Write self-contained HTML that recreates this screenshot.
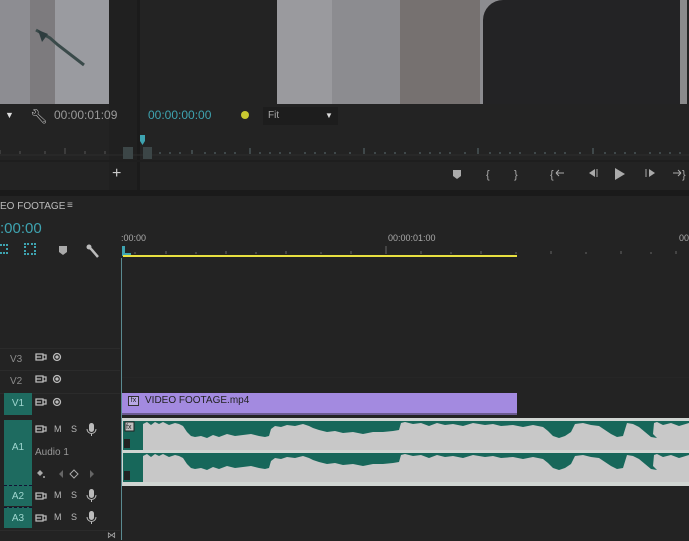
<!DOCTYPE html>
<html><head><meta charset="utf-8">
<style>
*{margin:0;padding:0;box-sizing:border-box}
body{width:689px;height:540px;overflow:hidden;background:#232323;font-family:"Liberation Sans",sans-serif;position:relative;color:#9a9a9a}
.a{position:absolute}
.t{font-size:11px;color:#a8a8a8;white-space:nowrap}
.blue{color:#3ea3b0}
.hdr{position:absolute;left:4px;width:28px;background:#1e6b60;color:#9fd6cf;font-size:10px;text-align:center}
.lbl{position:absolute;left:10px;font-size:10px;color:#8c8c8c}
.ico{position:absolute;font-size:9px;color:#b8b8b8}
</style></head><body>
<!-- top monitors -->
<div class="a" style="left:0;top:0;width:109px;height:104px;background:#9a9ba0"></div>
<div class="a" style="left:0;top:0;width:50px;height:104px;background:#8d8d92"></div>
<div class="a" style="left:30px;top:0;width:25px;height:104px;background:#7d7b7e"></div>
<svg class="a" style="left:0;top:0" width="110" height="104"><path d="M36 30 L50 38 L58 45 L84 65" stroke="#3a4a4a" stroke-width="3" fill="none"/><path d="M38 30 L48 34 L42 42Z" fill="#2e3d3f"/></svg>
<div class="a" style="left:109px;top:0;width:28px;height:190px;background:#202020"></div>
<div class="a" style="left:137px;top:0;width:3px;height:190px;background:#1b1b1b"></div>
<div class="a" style="left:277px;top:0;width:410px;height:104px;background:#8c8c90"></div>
<div class="a" style="left:277px;top:0;width:55px;height:104px;background:#9a9a9e"></div>
<div class="a" style="left:400px;top:0;width:80px;height:104px;background:#767170"></div>
<div class="a" style="left:483px;top:0;width:204px;height:104px;background:#232325;border-radius:20px 0 0 0"></div>
<div class="a" style="left:680px;top:0;width:7px;height:104px;background:#8b8b8c"></div>
<!-- control bar -->
<div class="a t" style="left:5px;top:110px;color:#ddd;font-size:9px">▼</div>
<div class="a t" style="left:30px;top:108px;font-size:14px;color:#bbb">🔧︎</div>
<div class="a t" style="left:54px;top:108px;font-size:12px;color:#9a9a9a">00:00:01:09</div>
<div class="a t blue" style="left:148px;top:108px;font-size:12px">00:00:00:00</div>
<div class="a" style="left:241px;top:111px;width:8px;height:8px;border-radius:50%;background:#c8c830"></div>
<div class="a" style="left:263px;top:107px;width:75px;height:18px;background:#1d1d1d"></div>
<div class="a t" style="left:268px;top:110px;font-size:10px">Fit</div>
<div class="a t" style="left:325px;top:111px;font-size:8px;color:#ddd">▼</div>
<!-- mini ruler -->
<svg class="a" style="left:0;top:132px" width="689" height="30">
<line x1="0" y1="23" x2="689" y2="23" stroke="#2d2d2d"/>
<g stroke="#555"><path d="M0 22v-4M20 22v-3M45 22v-3M65 22v-6M85 22v-3M105 22v-3"/></g>
<g stroke="#4d5a5e" id="tk"></g>
<path d="M148 22v-2M160 22v-2M170 22v-2M180 22v-2M192 22v-4M205 22v-2M215 22v-2M225 22v-2M235 22v-2M250 22v-6M260 22v-2M270 22v-2M280 22v-2M290 22v-2M305 22v-2M315 22v-2M325 22v-2M335 22v-2M350 22v-2M364 22v-6M375 22v-2M385 22v-2M395 22v-2M405 22v-2M420 22v-2M430 22v-2M440 22v-2M450 22v-2M465 22v-2M478 22v-6M490 22v-2M500 22v-2M510 22v-2M520 22v-2M535 22v-2M545 22v-2M555 22v-2M565 22v-2M580 22v-2M593 22v-6M605 22v-2M615 22v-2M625 22v-2M635 22v-2M650 22v-2M660 22v-2M670 22v-2M680 22v-2" stroke="#5b6d72"/>
<path d="M140 3h5v6l-2.5 4l-2.5-4z" fill="#3ea3b0"/>
</svg>
<div class="a" style="left:123px;top:147px;width:10px;height:12px;background:#3c4647"></div>
<div class="a" style="left:143px;top:147px;width:9px;height:12px;background:#3c4647"></div>
<div class="a" style="left:0;top:160px;width:689px;height:2px;background:#1e1e1e"></div>
<div class="a t" style="left:112px;top:165px;font-size:16px;color:#ccc">+</div>
<!-- transport -->
<svg class="a" style="left:440px;top:160px" width="249" height="28" fill="#aaa" stroke="#aaa">
<path d="M13 10h8v6l-4 3l-4-3z" stroke="none"/>
<text x="46" y="18" font-size="11" stroke="none" font-family="Liberation Sans">{</text>
<text x="74" y="18" font-size="11" stroke="none" font-family="Liberation Sans">}</text>
<text x="110" y="18" font-size="11" stroke="none" font-family="Liberation Sans">{</text><path d="M116 13h8M116 13l3-3M116 13l3 3" fill="none"/>
<path d="M149 13l6-4v8z" stroke="none"/><path d="M157 9v8" fill="none"/>
<path d="M175 8l10 6l-10 6z" stroke="none"/>
<path d="M206 9v8" fill="none"/><path d="M209 9l6 4l-6 4z" stroke="none"/>
<path d="M233 13h8M241 13l-3-3M241 13l-3 3" fill="none"/><text x="242" y="18" font-size="11" stroke="none" font-family="Liberation Sans">}</text>
</svg>
<!-- divider -->
<div class="a" style="left:0;top:190px;width:689px;height:6px;background:#1a1a1a"></div>
<!-- timeline header -->
<div class="a t" style="left:0;top:201px;font-size:10px;color:#bbb">EO FOOTAGE</div>
<div class="a t" style="left:67px;top:200px;font-size:10px;color:#bbb">≡</div>
<div class="a t blue" style="left:0;top:220px;font-size:15px">:00:00</div>
<div class="a t" style="left:121px;top:233px;font-size:9px;color:#aaa">:00:00</div>
<div class="a t" style="left:388px;top:233px;font-size:9px;color:#aaa">00:00:01:00</div>
<div class="a t" style="left:679px;top:233px;font-size:9px;color:#aaa">00</div>
<div class="a" style="left:0;top:244px;width:8px;height:10px;border:2px dotted #3ea3b0;border-left:none"></div>
<div class="a" style="left:24px;top:243px;width:12px;height:12px;border:2px solid #3ea3b0;border-style:dotted"></div>
<svg class="a" style="left:58px;top:244px" width="44" height="14"><path d="M1 2h8v6l-4 3l-4-3z" fill="#aaa"/><path d="M30 2l4 4l6 7" stroke="#bbb" stroke-width="2.5" fill="none"/><circle cx="31" cy="3" r="2.5" fill="#bbb"/></svg>
<svg class="a" style="left:121px;top:244px" width="568" height="14">
<path d="M14 10v-2M45 10v-3M75 10v-2M105 10v-3M135 10v-2M165 10v-3M200 10v-2M230 10v-3M265 10v-8M300 10v-3M330 10v-2M360 10v-3M395 10v-2M430 10v-3M465 10v-2M500 10v-3M530 10v-2M555 10v-3" stroke="#666"/>
<path d="M1 2h3v7h6v3h-9z" fill="#3ea3b0"/>
<rect x="2" y="11" width="394" height="2" fill="#e8e040"/>
</svg>
<div class="a" style="left:121px;top:258px;width:1px;height:282px;background:#5a8a90"></div>
<!-- header column -->
<div class="a" style="left:0;top:258px;width:120px;height:282px;background:#232323"></div>
<div class="a" style="left:0;top:348px;width:120px;height:1px;background:#2b2b2b"></div>
<div class="a" style="left:0;top:370px;width:120px;height:1px;background:#2b2b2b"></div>
<div class="a" style="left:0;top:393px;width:120px;height:1px;background:#2b2b2b"></div>
<div class="a" style="left:122px;top:377px;width:567px;height:1px;background:#262626"></div>
<div class="lbl" style="top:354px">V3</div>
<div class="lbl" style="top:376px">V2</div>
<div class="hdr" style="top:393px;height:22px;line-height:22px">V1</div>
<div class="hdr" style="top:420px;height:68px;line-height:56px">A1</div>
<div class="hdr" style="top:485px;height:21px;line-height:21px;border-top:1px dashed #113">A2</div>
<div class="hdr" style="top:507px;height:21px;line-height:21px;border-top:1px dashed #113">A3</div>
<svg class="a" style="left:34px;top:350px" width="30" height="180" fill="none" stroke="#bbb" stroke-width="1.3">
<g id="vi"><path d="M2 4h7v6h-7zM2 7h5M9 5l3 0v4h-3"/><circle cx="23" cy="7" r="3.5"/><circle cx="23" cy="7" r="1" fill="#bbb"/></g>
<g transform="translate(0,22)"><path d="M2 4h7v6h-7zM2 7h5M9 5l3 0v4h-3"/><circle cx="23" cy="7" r="3.5"/><circle cx="23" cy="7" r="1" fill="#bbb"/></g>
<g transform="translate(0,45)"><path d="M2 4h7v6h-7zM2 7h5M9 5l3 0v4h-3"/><circle cx="23" cy="7" r="3.5"/><circle cx="23" cy="7" r="1" fill="#bbb"/></g>
<g transform="translate(0,72)"><path d="M2 4h7v6h-7zM2 7h5M9 5l3 0v4h-3"/></g>
<g transform="translate(0,139)"><path d="M2 4h7v6h-7zM2 7h5M9 5l3 0v4h-3"/></g>
<g transform="translate(0,161)"><path d="M2 4h7v6h-7zM2 7h5M9 5l3 0v4h-3"/></g>
</svg>
<div class="ico" style="left:54px;top:424px">M</div><div class="ico" style="left:71px;top:424px">S</div>
<div class="ico" style="left:54px;top:490px">M</div><div class="ico" style="left:71px;top:490px">S</div>
<div class="ico" style="left:54px;top:512px">M</div><div class="ico" style="left:71px;top:512px">S</div>
<svg class="a" style="left:86px;top:420px" width="12" height="110" fill="#bbb"><g id="mic"><rect x="3" y="3" width="5" height="9" rx="2.5"/><path d="M1 9a4.5 4.5 0 0 0 9 0M5.5 13v3" stroke="#bbb" fill="none"/></g><use href="#mic" y="66"/><use href="#mic" y="88"/></svg>
<div class="a" style="left:35px;top:447px;font-size:10px;color:#999">Audio 1</div>
<svg class="a" style="left:36px;top:468px" width="60" height="12" fill="#aaa"><path d="M4 2l3 3l-3 3l-3-3z"/><circle cx="8" cy="9" r="1"/><path d="M23 6l4-4v8z" fill="#666"/><path d="M38 2l4 4l-4 4l-4-4z" fill="none" stroke="#aaa"/><path d="M54 2l4 4l-4 4z" fill="#666"/></svg>
<div class="a" style="left:0;top:530px;width:120px;height:1px;background:#2b2b2b"></div>
<div class="a t" style="left:107px;top:530px;font-size:9px;color:#aaa">⋈</div>
<!-- video clip -->
<div class="a" style="left:122px;top:393px;width:395px;height:22px;background:#a38ae0;border-bottom:2px solid #6a5a90"></div>
<div class="a" style="left:128px;top:396px;width:11px;height:10px;border:1px solid #333;background:#b9a9e6;font-size:7px;color:#222;line-height:8px;text-align:center">fx</div>
<div class="a" style="left:145px;top:395px;font-size:10px;color:#222">VIDEO FOOTAGE.mp4</div>
<!-- audio clip -->
<div class="a" style="left:122px;top:418px;width:567px;height:68px;background:#d0d5d2"></div>
<svg class="a" style="left:123px;top:420px" width="566" height="64">
<g id="ch">
<rect x="0" y="1" width="566" height="29" fill="#17675a"/>
<polygon fill="#c8c8c8" points="20,30 20,4 24,2 28,5 32,2 36,4 40,2 46,5 52,3 56,4 60,6 64,12 68,16 72,17 78,16 84,18 90,15 96,17 104,14 112,16 120,15 128,14 136,16 142,17 146,16 148,9 152,6 158,7 164,5 172,6 180,4 186,6 190,8 196,10 204,12 212,11 220,13 230,12 240,14 250,12 260,12 270,11 276,10 278,3 282,2 290,4 298,3 306,6 314,3 322,5 330,4 340,6 350,3 362,5 370,4 378,6 390,5 400,7 410,5 420,7 425,11 430,16 436,18 442,16 448,12 452,4 460,3 468,5 476,6 482,10 488,14 494,17 500,16 504,3 510,4 516,7 522,12 528,17 534,18 530,14 531,3 534,2 540,5 548,3 556,6 566,3 566,30"/>
<rect x="0" y="1" width="20" height="29" fill="#17675a"/>
<rect x="0" y="0" width="566" height="1" fill="#d0d5d2"/>
</g>
<use href="#ch" y="32"/>
<rect x="2" y="2" width="9" height="9" fill="#c0c0c0" stroke="#222"/><text x="3" y="9" font-size="7" fill="#222" font-family="Liberation Sans">fx</text>
<rect x="1" y="19" width="6" height="9" fill="#222"/><rect x="1" y="51" width="6" height="9" fill="#222"/>
</svg>
</body></html>
